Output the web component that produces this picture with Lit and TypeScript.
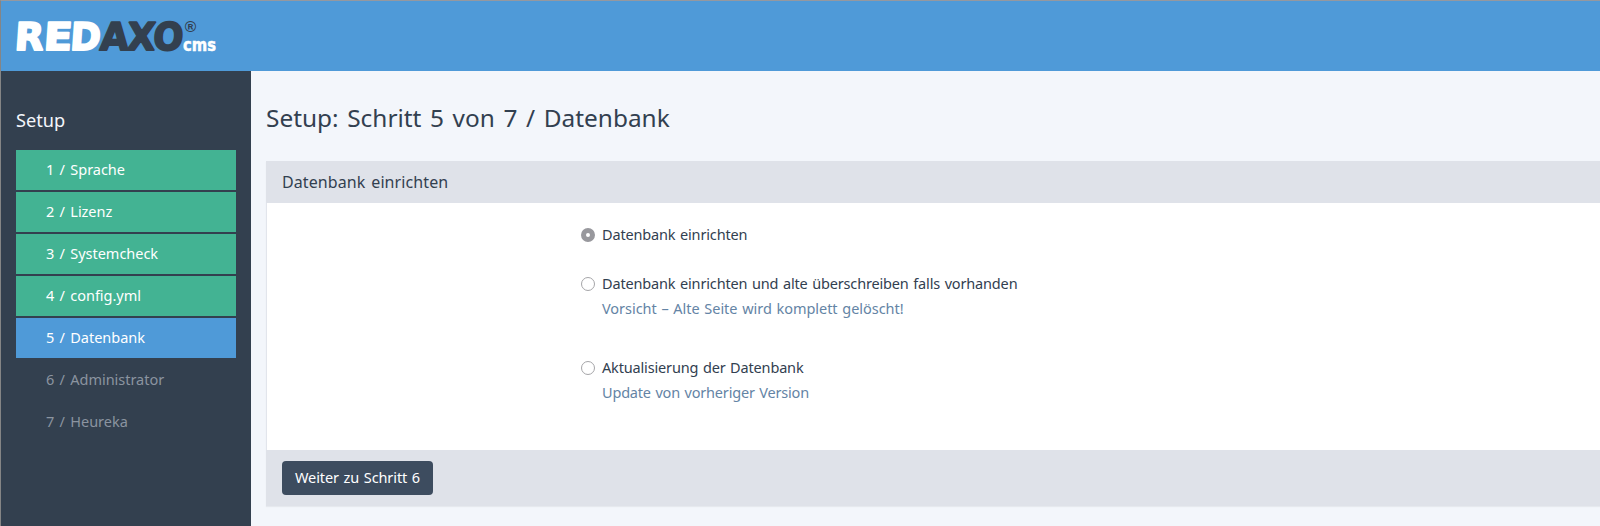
import { LitElement, html, svg, css } from "lit";
import { customElement } from "lit/decorators.js";
import { classMap } from "lit/directives/class-map.js";

interface Step { label: string; state: "done" | "active" | "open"; }
interface Option { label: string; help?: string; checked?: boolean; }

@customElement("setup-logo")
class SetupLogo extends LitElement {
  static styles = css`
    :host { display: block; width: 225px; height: 70px; }
    svg { display: block; }
    .word { font: bold 38px "DejaVu Sans", sans-serif; stroke-width: 2; stroke-linejoin: round; }
    .light { fill: #fff; stroke: #fff; }
    .dark { fill: #33404f; stroke: #33404f; }
    .reg { font: bold 14px "Liberation Sans", sans-serif; fill: #33404f; }
    .cms { font: bold 17px "DejaVu Sans", sans-serif; fill: #fff; stroke: #fff; stroke-width: .5; }
  `;
  letters: [string, number, number, string][] = [
    ["R", -2, 29, "light"], ["E", 27, 28.5, "light"], ["D", 53.5, 30.5, "light"],
    ["A", 83.5, 28.5, "dark"], ["X", 110.5, 28, "dark"], ["O", 136.5, 30, "dark"],
  ];
  render() {
    return html`<svg width="225" height="70" viewBox="-15 0 225 70" role="img" aria-label="REDAXO cms">
      <g transform="translate(0 49) skewX(-4)">
        ${this.letters.map(([c, x, w, tone]) => svg`<text class=${"word " + tone} x=${x} y="0" textLength=${w} lengthAdjust="spacingAndGlyphs">${c}</text>`)}
      </g>
      <text class="reg" x="168.8" y="30.5" textLength="11.5" lengthAdjust="spacingAndGlyphs">®</text>
      <text class="cms" x="167" y="49.7" textLength="33" lengthAdjust="spacingAndGlyphs">cms</text>
    </svg>`;
  }
}

@customElement("setup-nav")
class SetupNav extends LitElement {
  static styles = css`
    :host { display: block; padding: 38px 15px 0; }
    h2 { margin: 0 0 18px; font-size: 18.2px; line-height: 23px; font-weight: 400; color: #f3f6fb; }
    ul { list-style: none; margin: 0; padding: 0; display: grid; gap: 2px; }
    li { height: 40px; line-height: 39px; padding-left: 30px; color: #8b94a0; word-spacing: 1.6px; letter-spacing: -.03px; }
    .done { background: #43b393; color: #fff; }
    .active { background: #4f9ad8; color: #fff; }
  `;
  steps: Step[] = [
    { label: "1 / Sprache", state: "done" },
    { label: "2 / Lizenz", state: "done" },
    { label: "3 / Systemcheck", state: "done" },
    { label: "4 / config.yml", state: "done" },
    { label: "5 / Datenbank", state: "active" },
    { label: "6 / Administrator", state: "open" },
    { label: "7 / Heureka", state: "open" },
  ];
  render() {
    return html`<h2>Setup</h2>
      <ul>${this.steps.map((s) => html`<li class=${classMap({ [s.state]: true })}>${s.label}</li>`)}</ul>`;
  }
}

@customElement("setup-panel")
class SetupPanel extends LitElement {
  static styles = css`
    :host { display: block; box-shadow: 0 1px 1px rgba(0, 0, 0, .05); }
    header { box-sizing: border-box; height: 42px; padding-left: 16px; line-height: 42px; background: #dfe2e9; font-size: 16px; word-spacing: 1.5px; letter-spacing: .1px; }
    .body { box-sizing: border-box; height: 247px; padding: 19px 0 0 314px; background: #fff; border-left: 1px solid #e2e5ec; }
    .option { display: grid; grid-template-columns: 14px 1fr; column-gap: 7px; line-height: 25px; letter-spacing: -.16px; }
    .plain { margin-bottom: 24px; }
    .helped { margin-bottom: 34px; }
    .radio { box-sizing: border-box; width: 14px; height: 14px; margin-top: 6px; border: 1px solid #a5a5a8; border-radius: 50%; background: #fff; }
    .checked { border: 5px solid #98989d; }
    .help { grid-column: 2; color: #6484a5; letter-spacing: -.19px; }
    .caution { letter-spacing: -.04px; }
    footer { box-sizing: border-box; height: 56px; padding: 11px 16px 0; background: #dfe2e9; }
    button { display: block; width: 151px; height: 34px; padding: 0 0 2px; border: 0; border-radius: 4px; background: #3d4c5f; color: #fff; font: inherit; word-spacing: 1px; letter-spacing: -.1px; line-height: 32px; }
  `;
  options: Option[] = [
    { label: "Datenbank einrichten", checked: true },
    { label: "Datenbank einrichten und alte überschreiben falls vorhanden", help: "Vorsicht – Alte Seite wird komplett gelöscht!" },
    { label: "Aktualisierung der Datenbank", help: "Update von vorheriger Version" },
  ];
  render() {
    return html`<header>Datenbank einrichten</header>
      <div class="body">${this.options.map((o, i) => html`
        <div class=${classMap({ option: true, helped: !!o.help, plain: !o.help })}>
          <span class=${classMap({ radio: true, checked: !!o.checked })}></span>
          <span>${o.label}</span>
          ${o.help ? html`<span class=${classMap({ help: true, caution: i === 1 })}>${o.help}</span>` : null}
        </div>`)}</div>
      <footer><button>Weiter zu Schritt 6</button></footer>`;
  }
}

@customElement("app-root")
class AppRoot extends LitElement {
  static styles = css`
    :host { box-sizing: border-box; display: flex; flex-direction: column; height: 526px; overflow: hidden; border-top: 1px solid #95989f; border-left: 1px solid #858585; background: #f3f6fb; color: #324050; font: 14.5px "Noto Sans", sans-serif; word-spacing: 1px; }
    .top { flex: none; height: 70px; background: #4f9ad8; }
    .main { flex: 1; display: grid; grid-template-columns: 250px 1fr; }
    setup-nav { background: #33404f; }
    .content { padding: 31px 0 0 15px; }
    h1 { margin: 0 0 27px; font-size: 24.4px; line-height: 32px; font-weight: 400; word-spacing: 2.3px; }
  `;
  render() {
    return html`<div class="top"><setup-logo></setup-logo></div>
      <div class="main">
        <setup-nav></setup-nav>
        <div class="content"><h1>Setup: Schritt 5 von 7 / Datenbank</h1><setup-panel></setup-panel></div>
      </div>`;
  }
}
